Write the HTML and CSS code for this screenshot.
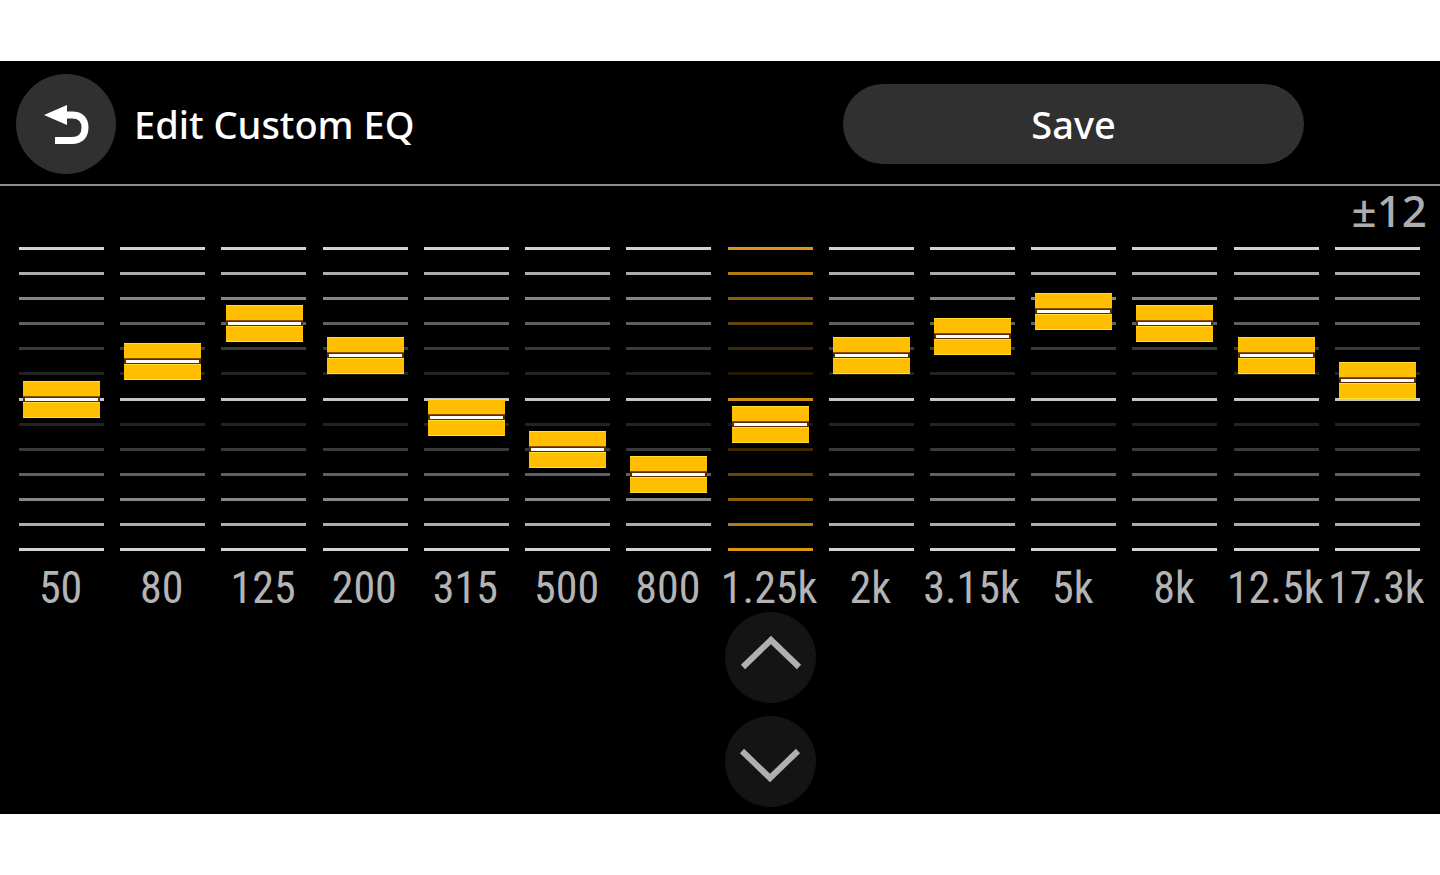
FILE: index.html
```html
<!DOCTYPE html>
<html lang="en">
<head>
<meta charset="utf-8">
<meta name="viewport" content="width=device-width, initial-scale=1">
<title>Edit Custom EQ</title>
<link rel="stylesheet" href="styles.css">
<script src="bands.js" defer></script>
</head>
<body>
<svg class="defs" aria-hidden="true">
  <symbol id="ladder">
    <rect y="0" width="100%" height="3" opacity="1"/>
    <rect y="25" width="100%" height="3" opacity=".82"/>
    <rect y="50" width="100%" height="3" opacity=".64"/>
    <rect y="75" width="100%" height="3" opacity=".46"/>
    <rect y="100" width="100%" height="3" opacity=".28"/>
    <rect y="125" width="100%" height="3" opacity=".17"/>
    <rect y="151" width="100%" height="3" opacity=".94"/>
    <rect y="176" width="100%" height="3" opacity=".17"/>
    <rect y="201" width="100%" height="3" opacity=".28"/>
    <rect y="226" width="100%" height="3" opacity=".46"/>
    <rect y="251" width="100%" height="3" opacity=".64"/>
    <rect y="276" width="100%" height="3" opacity=".82"/>
    <rect y="301" width="100%" height="3" opacity="1"/>
  </symbol>
</svg>
<main class="screen">
  <header class="bar">
    <button class="back" type="button" aria-label="Back">
      <svg width="48" height="44" viewBox="0 0 48 44" aria-hidden="true">
        <path class="arrow-line" d="M22 13H30C39 13 43 18 43 25.500S39 38.500 30 38.500H13"/>
        <path class="arrow-head" d="M2 13 25 3V23Z"/>
      </svg>
    </button>
    <h1 class="title">Edit Custom EQ</h1>
    <button class="save" type="button">Save</button>
  </header>
  <p class="range">±12</p>
  <section class="bands" aria-label="Equalizer bands"></section>
  <div class="steps">
    <div class="stepper">
      <button class="step" type="button" aria-label="Raise level">
        <svg width="64" height="56" viewBox="0 0 64 56" aria-hidden="true"><path d="M5 37 33 10 61 37"/></svg>
      </button>
      <button class="step" type="button" aria-label="Lower level">
        <svg width="64" height="56" viewBox="0 0 64 56" aria-hidden="true"><path d="M4 17 32 44 60 17"/></svg>
      </button>
    </div>
  </div>
</main>
</body>
</html>
```
FILE: styles.css
```css
* {
  box-sizing: border-box;
}

body {
  margin: 0;
  background: #fff;
  font-family: "Noto Sans", "Open Sans", sans-serif;
}

button {
  border: 0;
  padding: 0;
  font: inherit;
  color: inherit;
  cursor: pointer;
}

.defs {
  position: absolute;
  width: 0;
  height: 0;
}

.screen {
  margin: 61px 0;
  padding-bottom: 7px;
  background: #000;
  color: #fff;
  overflow: hidden;
}

.bar {
  display: flex;
  align-items: center;
  padding: 13px 136px 10px 16px;
  border-bottom: 2px solid #8c8c8c;
}

.back {
  display: grid;
  place-items: center;
  width: 100px;
  height: 100px;
  border-radius: 50%;
  background: #303030;
}

.arrow-line {
  fill: none;
  stroke: #fff;
  stroke-width: 7;
}

.arrow-head {
  fill: #fff;
}

.title {
  margin: 0 auto 0 18px;
  font-size: 38px;
  font-weight: 500;
  line-height: 48px;
}

.save {
  flex: 0 1 461px;
  height: 80px;
  border-radius: 40px;
  background: #303030;
  font-size: 38px;
  font-weight: 500;
  line-height: 48px;
}

.range {
  margin: 0;
  padding: 4px 13px 0 0;
  font-size: 44px;
  font-weight: 500;
  line-height: 40px;
  text-align: right;
  color: #adadad;
}

.bands,
.steps {
  display: grid;
  grid-template-columns: repeat(14, minmax(0, 1fr));
  column-gap: 16px;
  padding: 0 20px 0 19px;
}

.band {
  display: grid;
  grid-template-columns: minmax(0, 1fr);
  grid-template-rows: 338px 44px;
  justify-items: center;
  color: #d2d2d2;
}

.band.selected {
  color: #dc9612;
}

.ladder,
.slider {
  grid-area: 1 / 1;
}

.ladder {
  align-self: center;
  width: 100%;
  height: 304px;
  fill: currentColor;
}

.slider {
  appearance: none;
  writing-mode: vertical-lr;
  direction: rtl;
  width: 77px;
  height: 338px;
  margin: 0;
  background: transparent;
}

.slider::-webkit-slider-runnable-track {
  width: 77px;
  height: 338px;
  background: transparent;
}

.slider::-webkit-slider-thumb {
  appearance: none;
  width: 77px;
  height: 37px;
  background:
    linear-gradient(#fff, #fff) 50% 17px / 73px 3px no-repeat,
    linear-gradient(#5a2c00, #5a2c00) 50% 16px / 75px 5px no-repeat,
    linear-gradient(#ffe02e 1px, #ffbf00 1px 15px, #8a4e00 15px 16px, #5a2c00 16px 21px, #ffe02e 21px 22px, #ffbf00 22px 36px, #ffe02e 36px);
}

.label {
  padding-right: 2px;
  font-family: "Roboto Condensed", Roboto, sans-serif;
  font-size: 44px;
  font-weight: 400;
  line-height: 40px;
  white-space: nowrap;
  color: #b4b4b4;
}

.stepper {
  grid-column: 8;
  justify-self: center;
  display: grid;
  gap: 13px;
}

.step {
  display: grid;
  place-items: center;
  width: 91px;
  height: 91px;
  border-radius: 50%;
  background: #141414;
}

.step path {
  fill: none;
  stroke: #b0b0b0;
  stroke-width: 6;
}
```
FILE: bands.js
```js
const bands = [
  ["50", 0], ["80", 3], ["125", 6], ["200", 3.5], ["315", -1.5],
  ["500", -4], ["800", -6], ["1.25k", -2], ["2k", 3.5], ["3.15k", 5],
  ["5k", 7], ["8k", 6], ["12.5k", 3.5], ["17.3k", 1.5]
];
const selected = "1.25k";

document.querySelector(".bands").innerHTML = bands.map(([name, level], i) => `
  <div class="band${name === selected ? " selected" : ""}">
    <svg class="ladder" aria-hidden="true"><use href="#ladder"/></svg>
    <input class="slider" id="band-${i}" type="range" min="-12" max="12" step="0.5" value="${level}">
    <label class="label" for="band-${i}">${name}</label>
  </div>`).join("");
```
